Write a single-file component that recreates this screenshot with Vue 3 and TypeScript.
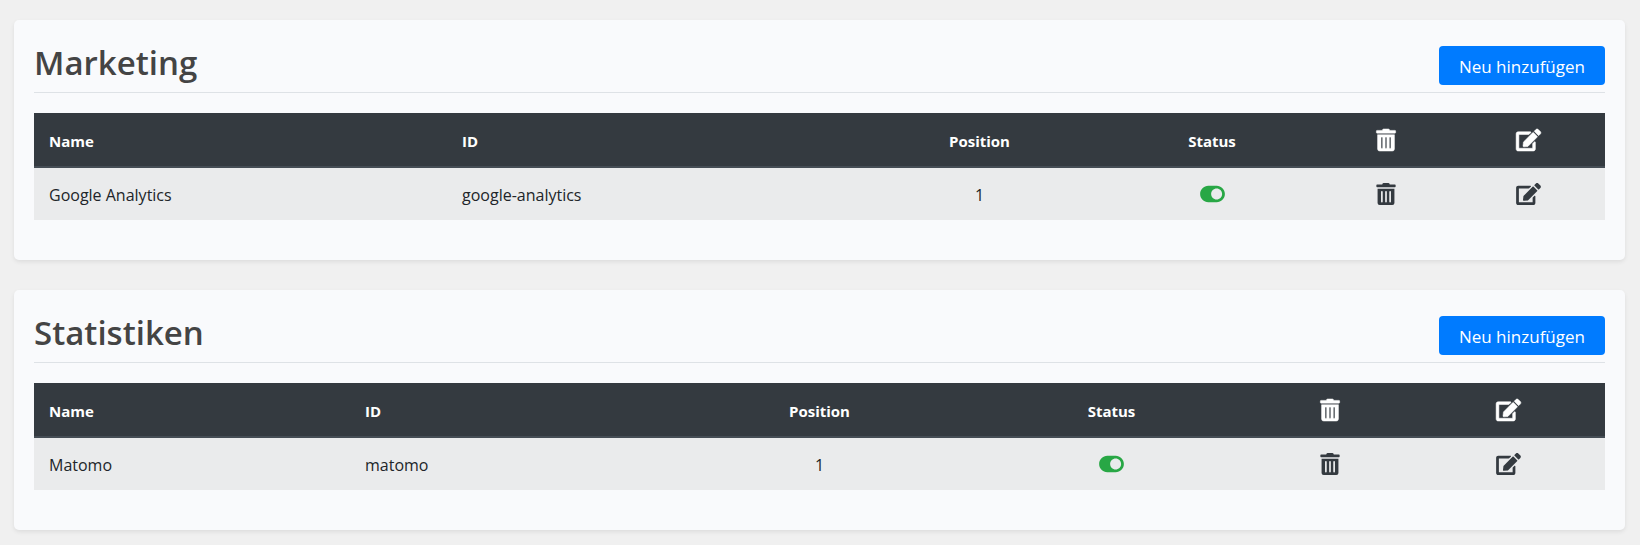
<script setup lang="ts">
import { ref } from 'vue'

interface Service {
  name: string
  id: string
  position: number
  active: boolean
}

interface Group {
  key: string
  title: string
  columns: number[]
  services: Service[]
}

const groups = ref<Group[]>([
  {
    key: 'marketing',
    title: 'Marketing',
    columns: [413, 409, 247, 218, 130, 154],
    services: [{ name: 'Google Analytics', id: 'google-analytics', position: 1, active: true }],
  },
  {
    key: 'statistics',
    title: 'Statistiken',
    columns: [316, 313, 313, 271, 166, 192],
    services: [{ name: 'Matomo', id: 'matomo', position: 1, active: true }],
  },
])

const trashPath =
  'M28 464a48 48 0 0 0 48 48h296a48 48 0 0 0 48-48V132H28zM108 204a20 20 0 0 1 40 0v228a20 20 0 0 1-40 0zM204 204a20 20 0 0 1 40 0v228a20 20 0 0 1-40 0zM300 204a20 20 0 0 1 40 0v228a20 20 0 0 1-40 0zM432 32H312l-9.4-18.7A24 24 0 0 0 281.1 0H166.8a23.72 23.72 0 0 0-21.4 13.3L136 32H16A16 16 0 0 0 0 48v32a16 16 0 0 0 16 16h416a16 16 0 0 0 16-16V48a16 16 0 0 0-16-16z'
const editPath =
  'M402.6 83.2l90.2 90.2c3.8 3.8 3.8 10 0 13.8L274.4 405.6l-92.8 10.3c-12.4 1.4-22.9-9.1-21.5-21.5l10.3-92.8L388.8 83.2c3.8-3.8 10-3.8 13.8 0zm162-22.9l-48.8-48.8c-15.2-15.2-39.9-15.2-55.2 0l-35.4 35.4c-3.8 3.8-3.8 10 0 13.8l90.2 90.2c3.8 3.8 10 3.8 13.8 0l35.4-35.4c15.2-15.3 15.2-40 0-55.2zM384 346.2V448H64V128h229.8c3.2 0 6.2-1.3 8.5-3.5l40-40c7.6-7.6 2.2-20.5-8.5-20.5H48C21.5 64 0 85.5 0 112v352c0 26.5 21.5 48 48 48h352c26.5 0 48-21.5 48-48V306.2c0-10.7-12.9-16-20.5-8.5l-40 40c-2.2 2.3-3.5 5.3-3.5 8.5z'
const togglePath =
  'M384 64H192C86 64 0 150 0 256s86 192 192 192h192c106 0 192-86 192-192S490 64 384 64zm0 320c-70.8 0-128-57.3-128-128 0-70.8 57.3-128 128-128 70.8 0 128 57.3 128 128 0 70.8-57.3 128-128 128z'

function share(columns: number[], width: number): string {
  const total = columns.reduce((sum, value) => sum + value, 0)
  return `${(width / total) * 100}%`
}
</script>

<template>
  <main class="page">
    <section v-for="group in groups" :key="group.key" class="card" :aria-labelledby="group.key">
      <header class="card-head">
        <h2 :id="group.key" class="title">{{ group.title }}</h2>
        <button type="button" class="add">Neu hinzufügen</button>
      </header>
      <table class="services">
        <colgroup>
          <col v-for="(width, i) in group.columns" :key="i" :style="{ width: share(group.columns, width) }" />
        </colgroup>
        <thead>
          <tr>
            <th scope="col">Name</th>
            <th scope="col">ID</th>
            <th scope="col" class="center">Position</th>
            <th scope="col" class="center">Status</th>
            <th scope="col" class="tool" aria-label="Löschen">
              <svg class="icon trash" viewBox="0 0 448 512" aria-hidden="true"><path :d="trashPath" /></svg>
            </th>
            <th scope="col" class="tool" aria-label="Bearbeiten">
              <svg class="icon" viewBox="0 0 576 512" aria-hidden="true"><path :d="editPath" /></svg>
            </th>
          </tr>
        </thead>
        <tbody>
          <tr v-for="service in group.services" :key="service.id">
            <td>{{ service.name }}</td>
            <td>{{ service.id }}</td>
            <td class="center">{{ service.position }}</td>
            <td class="tool">
              <button
                type="button"
                role="switch"
                class="action toggle"
                :class="{ off: !service.active }"
                :aria-checked="service.active"
                aria-label="Status"
                @click="service.active = !service.active"
              >
                <svg class="icon" viewBox="0 0 576 512" aria-hidden="true"><path :d="togglePath" /></svg>
              </button>
            </td>
            <td class="tool">
              <button type="button" class="action" aria-label="Löschen">
                <svg class="icon trash" viewBox="0 0 448 512" aria-hidden="true"><path :d="trashPath" /></svg>
              </button>
            </td>
            <td class="tool">
              <button type="button" class="action" aria-label="Bearbeiten">
                <svg class="icon" viewBox="0 0 576 512" aria-hidden="true"><path :d="editPath" /></svg>
              </button>
            </td>
          </tr>
        </tbody>
      </table>
    </section>
  </main>
</template>

<style>
body {
  margin: 0;
  background: #f0f0f0;
}
</style>

<style scoped>
.page {
  display: flex;
  flex-direction: column;
  gap: 30px;
  padding: 20px 15px 15px 14px;
  font-family: "Segoe UI", "Open Sans", "Noto Sans", sans-serif;
  font-size: 16px;
  line-height: 24px;
  color: #212529;
}

.card {
  padding: 20px 20px 40px;
  border-radius: 5px;
  background: #f9fafc;
  box-shadow: 0 2px 4px rgba(0, 0, 0, 0.08);
}

.card-head {
  display: flex;
  align-items: flex-end;
  justify-content: space-between;
  margin-bottom: 20px;
  padding-bottom: 7px;
  border-bottom: 1px solid #dee2e6;
}

.title {
  margin: 0;
  font-size: 33px;
  font-weight: 600;
  line-height: 45px;
  color: #444;
}

.add {
  padding: 7px 20px 5px;
  border: 0;
  border-radius: 4px;
  background: #007bff;
  color: #fff;
  font: inherit;
  font-size: 17px;
  line-height: 27px;
  cursor: pointer;
}

.services {
  width: 100%;
  table-layout: fixed;
  border-collapse: separate;
  border-spacing: 0;
}

th,
td {
  height: 52px;
  box-sizing: border-box;
  padding: 2px 15px 0;
  text-align: left;
  vertical-align: middle;
}

th {
  height: 55px;
  border-bottom: 2px solid #454d55;
  background: #343a40;
  color: #fff;
  font-size: 15px;
  font-weight: 700;
}

td {
  background: #eaebec;
}

.center {
  text-align: center;
}

.tool {
  padding: 0 15px;
}

.icon {
  display: block;
  width: 25px;
  height: 22px;
  margin: 0 auto;
  overflow: visible;
  fill: currentColor;
  fill-rule: evenodd;
}

.trash {
  width: 20px;
}

th .icon {
  stroke: currentColor;
  stroke-width: 12px;
}

.action {
  display: block;
  margin: 0 auto;
  padding: 0;
  border: 0;
  background: none;
  color: #343a40;
  cursor: pointer;
}

.toggle {
  color: #28a745;
}

.off {
  color: #6c757d;
  transform: scaleX(-1);
}
</style>
